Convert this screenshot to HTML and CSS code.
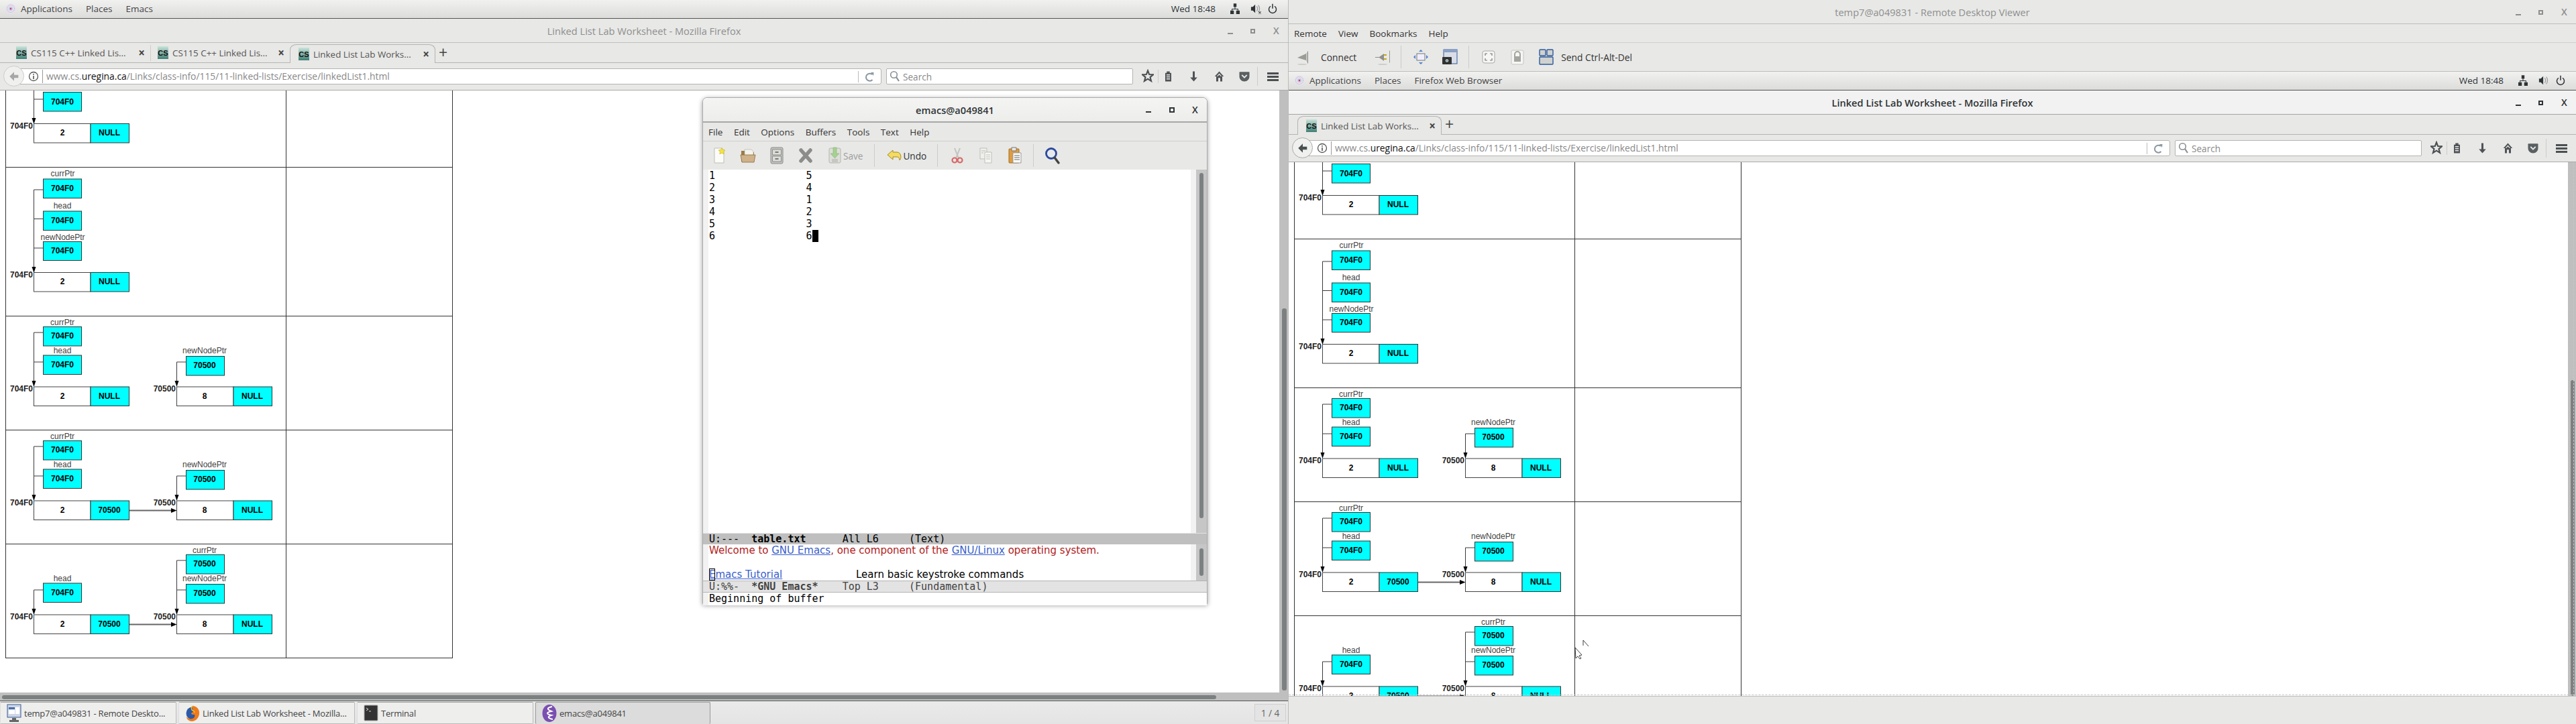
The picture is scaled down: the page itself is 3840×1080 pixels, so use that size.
FILE: index.html
```html
<!DOCTYPE html>
<html lang="en">
<head>
<meta charset="utf-8">
<title>Linked List Lab Worksheet</title>
<link rel="stylesheet" href="styles.css">
</head>
<body>
<svg class="defs" aria-hidden="true">
  <symbol id="foot" viewBox="0 0 16 20"><circle cx="8" cy="10" r="7.5" fill="#e6e2ee"/><circle cx="8" cy="10" r="5.5" fill="none" stroke="#a9a2c6" stroke-dasharray="1 1.2"/><circle cx="8" cy="10" r="3" fill="#c9c4de"/><circle cx="8" cy="10" r="1.2" fill="#c04060"/></symbol>
  <symbol id="star" viewBox="0 0 20 24"><path d="M10 2.500l2.400 6.200 6.600.4-5.100 4.200 1.700 6.400L10 16.100l-5.600 3.600 1.700-6.400L1 9.100l6.600-.4z" fill="none" stroke="#4a4f52" stroke-width="2.400"/></symbol>
  <symbol id="list" viewBox="0 0 20 24"><path d="M7 2h6v3h3v17H4V5h3z" fill="#4f5356"/><path d="M6.500 8h7v2h-7zm0 4h7v2h-7zm0 4h7v2h-7z" fill="#e8e8e6"/></symbol>
  <symbol id="down" viewBox="0 0 20 24"><path d="M8 2h4v12h5l-7 8-7-8h5z" fill="#4f5356"/></symbol>
  <symbol id="home" viewBox="0 0 20 24"><path d="M10 2L1 12h3v10h4v-7h4v7h4V12h3z" fill="#4f5356"/><path d="M10 6l-5 5.500h2L10 8.500l3 3h2z" fill="#e8e8e6"/></symbol>
  <symbol id="pocket" viewBox="0 0 20 24"><path d="M2 4h16a1 1 0 0 1 1 1v7c0 5-4 9-9 9s-9-4-9-9V5a1 1 0 0 1 1-1z" fill="#5a5f62"/><path d="M5.500 9.500L10 14l4.500-4.500" fill="none" stroke="#e8e8e6" stroke-width="2.400"/></symbol>
  <symbol id="burger" viewBox="0 0 17 13"><path d="M0 0h17v3H0zm0 5h17v3H0zm0 5h17v3H0z" fill="#4a4f52"/></symbol>
  <symbol id="info" viewBox="0 0 16 16"><circle cx="8" cy="8" r="6.500" fill="#fff" stroke="#555" stroke-width="1.300"/><path d="M7.200 7h1.600v5H7.200zm0-3h1.600v1.700H7.200z" fill="#555"/></symbol>
  <symbol id="reload" viewBox="0 0 16 20"><path d="M12 6a5.500 5.500 0 1 0 .5 8" fill="none" stroke="#8a97a0" stroke-width="2"/><path d="M10 3l4.500 0-.5 5z" fill="#8a97a0"/></symbol>
  <symbol id="lens" viewBox="0 0 16 20"><circle cx="6.500" cy="7.500" r="4.800" fill="none" stroke="#8a8f92" stroke-width="1.600"/><path d="M10 11l4 6" stroke="#8a8f92" stroke-width="2.200"/></symbol>
  <symbol id="net" viewBox="0 0 16 20"><path d="M5.500 1h5v6h-5zM0 13h6v6H0zM10 13h6v6h-6z" fill="#2e3436"/><path d="M8 7v3.500M3 13v-2.500h10V13" fill="none" stroke="#2e3436" stroke-width="1.200"/></symbol>
  <symbol id="vol" viewBox="0 0 18 20"><path d="M1 7h3l4-4v14l-4-4H1z" fill="#2e3436"/><path d="M10.500 6c2 2 2 6 0 8M13 4c3 3 3 9 0 12" fill="none" stroke="#9a9c9c" stroke-width="1.400"/></symbol>
  <symbol id="power" viewBox="0 0 16 20"><path d="M4.500 5a6.500 6.500 0 1 0 7 0" fill="none" stroke="#2e3436" stroke-width="1.700"/><path d="M8 1v8" stroke="#2e3436" stroke-width="1.800"/></symbol>
</svg>

<div class="screen">
  <section class="side">
    <header class="panel">
      <div class="panel-menu">
        <svg class="foot"><use href="#foot"/></svg>
        <span class="pm-apps">Applications</span><span>Places</span><span>Emacs</span>
      </div>
      <div class="panel-status">
        <span class="clock">Wed 18:48</span>
        <svg class="st-net"><use href="#net"/></svg>
        <svg class="st-vol" viewBox="0 0 18 20"><use href="#vol"/><path d="M14 15l3.500 3.500M17.500 15L14 18.500" stroke="#2e3436" stroke-width="1.300"/></svg>
        <svg class="st-pow"><use href="#power"/></svg>
      </div>
    </header>

    <div class="ff">
      <div class="wintitle">
        <span class="wt-text">Linked List Lab Worksheet - Mozilla Firefox</span>
        <div class="winctl"><i class="min"></i><i class="max"></i><b>X</b></div>
      </div>
      <div class="tabs">
        <div class="tab first"><span class="cs">CS</span><span class="tt">CS115 C++ Linked Lis...</span><b class="tx">×</b></div>
        <div class="tab sep"><span class="cs">CS</span><span class="tt">CS115 C++ Linked Lis...</span><b class="tx">×</b></div>
        <div class="tab active"><span class="cs">CS</span><span class="tt">Linked List Lab Works...</span><b class="tx">×</b></div>
        <span class="plus">+</span>
      </div>
      <div class="nav">
        <div class="back disabled"><svg viewBox="0 0 20 20"><path d="M10 2.500L2.500 10l7.500 7.500v-5h7v-5h-7z"/></svg></div>
        <div class="url">
          <svg class="ic-info"><use href="#info"/></svg>
          <span class="urltext">www.cs.<em>uregina.ca</em>/Links/class-info/115/11-linked-lists/Exercise/linkedList1.html</span>
          <svg class="ic-reload"><use href="#reload"/></svg>
        </div>
        <div class="search"><svg class="ic-lens"><use href="#lens"/></svg><span>Search</span></div>
        <div class="star-slot"><svg><use href="#star"/></svg></div>
        <svg class="ni ni-list"><use href="#list"/></svg>
        <svg class="ni"><use href="#down"/></svg>
        <svg class="ni"><use href="#home"/></svg>
        <svg class="ni ni-pocket"><use href="#pocket"/></svg>
        <div class="menu-slot"><svg><use href="#burger"/></svg></div>
      </div>

      <div class="page">
        <table class="lab">
          <tr class="clip-row"><td>
            <svg class="dgm h114">
              <path class="ln" d="M41.500 0V49M41.500 13H55.500"/><polygon class="ah" points="38.500,41 44.500,41 41.500,50"/>
              <rect class="ptr" x="55.500" y="2.500" width="57" height="28.500"/><text class="v" x="84" y="17">704F0</text>
              <text class="o" x="40" y="53">704F0</text>
              <rect class="cell" x="41.500" y="49.500" width="84.500" height="28.500"/><rect class="ptr" x="126" y="49.500" width="57.500" height="28.500"/>
              <text class="v" x="84" y="63">2</text><text class="v" x="154" y="63">NULL</text>
            </svg>
          </td><td></td></tr>
          <tr><td>
            <svg class="dgm h221">
              <path class="ln" d="M41.500 33V156M41.500 33H55.500M41.500 76.500H55.500M41.500 120H55.500"/><polygon class="ah" points="38.500,148 44.500,148 41.500,157"/>
              <text class="l" x="84.500" y="9">currPtr</text><rect class="ptr" x="55.500" y="17" width="57" height="28.500"/><text class="v" x="84" y="31">704F0</text>
              <text class="l" x="84" y="56.500">head</text><rect class="ptr" x="55.500" y="65" width="57" height="28.500"/><text class="v" x="84" y="79">704F0</text>
              <text class="l" x="84.500" y="104">newNodePtr</text><rect class="ptr" x="55.500" y="110.500" width="57" height="28"/><text class="v" x="84" y="124">704F0</text>
              <text class="o" x="40" y="160">704F0</text>
              <rect class="cell" x="41.500" y="156.500" width="84.500" height="28.500"/><rect class="ptr" x="126" y="156.500" width="57.500" height="28.500"/>
              <text class="v" x="84" y="170">2</text><text class="v" x="154" y="170">NULL</text>
            </svg>
          </td><td></td></tr>
          <tr><td>
            <svg class="dgm h169">
              <path class="ln" d="M41.500 24V104M41.500 24H55.500M41.500 68H55.500M254.500 68V104M254.500 68H268"/><polygon class="ah" points="38.500,96 44.500,96 41.500,105"/><polygon class="ah" points="251.500,96 257.500,96 254.500,105"/>
              <text class="l" x="84" y="9">currPtr</text><rect class="ptr" x="55.500" y="15.500" width="57" height="28.500"/><text class="v" x="84" y="29">704F0</text>
              <text class="l" x="84" y="51">head</text><rect class="ptr" x="55.500" y="58" width="57" height="28.500"/><text class="v" x="84" y="72">704F0</text>
              <text class="l" x="296" y="51">newNodePtr</text><rect class="ptr" x="268.500" y="59.500" width="57" height="28.500"/><text class="v" x="296" y="73">70500</text>
              <text class="o" x="40" y="108">704F0</text><text class="o" x="253" y="108">70500</text>
              <rect class="cell" x="41.500" y="105" width="84.500" height="28.500"/><rect class="ptr" x="126" y="105" width="57.500" height="28.500"/>
              <text class="v" x="84" y="118.500">2</text><text class="v" x="154" y="118.500">NULL</text>
              <rect class="cell" x="254.500" y="105" width="84.500" height="28.500"/><rect class="ptr" x="339" y="105" width="57.500" height="28.500"/>
              <text class="v" x="296" y="118.500">8</text><text class="v" x="367" y="118.500">NULL</text>
            </svg>
          </td><td></td></tr>
          <tr><td>
            <svg class="dgm h169">
              <path class="ln" d="M41.500 24V104M41.500 24H55.500M41.500 68H55.500M254.500 68V104M254.500 68H268"/><path class="thick" d="M183.500 119.500H248"/><polygon class="ah" points="38.500,96 44.500,96 41.500,105"/><polygon class="ah" points="251.500,96 257.500,96 254.500,105"/><polygon class="ah" points="246,116 246,123 254.500,119.500"/>
              <text class="l" x="84" y="9">currPtr</text><rect class="ptr" x="55.500" y="15.500" width="57" height="28.500"/><text class="v" x="84" y="29">704F0</text>
              <text class="l" x="84" y="51">head</text><rect class="ptr" x="55.500" y="58" width="57" height="28.500"/><text class="v" x="84" y="72">704F0</text>
              <text class="l" x="296" y="51">newNodePtr</text><rect class="ptr" x="268.500" y="59.500" width="57" height="28.500"/><text class="v" x="296" y="73">70500</text>
              <text class="o" x="40" y="108">704F0</text><text class="o" x="253" y="108">70500</text>
              <rect class="cell" x="41.500" y="105" width="84.500" height="28.500"/><rect class="ptr" x="126" y="105" width="57.500" height="28.500"/>
              <text class="v" x="84" y="118.500">2</text><text class="v" x="154" y="118.500">70500</text>
              <rect class="cell" x="254.500" y="105" width="84.500" height="28.500"/><rect class="ptr" x="339" y="105" width="57.500" height="28.500"/>
              <text class="v" x="296" y="118.500">8</text><text class="v" x="367" y="118.500">NULL</text>
            </svg>
          </td><td></td></tr>
          <tr><td>
            <svg class="dgm h169">
              <path class="ln" d="M41.500 68V104M41.500 68H55.500M254.500 24V104M254.500 24H268M254.500 68H268"/><path class="thick" d="M183.500 119.500H248"/><polygon class="ah" points="38.500,96 44.500,96 41.500,105"/><polygon class="ah" points="251.500,96 257.500,96 254.500,105"/><polygon class="ah" points="246,116 246,123 254.500,119.500"/>
              <text class="l" x="296" y="9">currPtr</text><rect class="ptr" x="268.500" y="15.500" width="57" height="28.500"/><text class="v" x="296" y="29">70500</text>
              <text class="l" x="84" y="51">head</text><rect class="ptr" x="55.500" y="58" width="57" height="28.500"/><text class="v" x="84" y="72">704F0</text>
              <text class="l" x="296" y="51">newNodePtr</text><rect class="ptr" x="268.500" y="59.500" width="57" height="28.500"/><text class="v" x="296" y="73">70500</text>
              <text class="o" x="40" y="108">704F0</text><text class="o" x="253" y="108">70500</text>
              <rect class="cell" x="41.500" y="105" width="84.500" height="28.500"/><rect class="ptr" x="126" y="105" width="57.500" height="28.500"/>
              <text class="v" x="84" y="118.500">2</text><text class="v" x="154" y="118.500">70500</text>
              <rect class="cell" x="254.500" y="105" width="84.500" height="28.500"/><rect class="ptr" x="339" y="105" width="57.500" height="28.500"/>
              <text class="v" x="296" y="118.500">8</text><text class="v" x="367" y="118.500">NULL</text>
            </svg>
          </td><td></td></tr>
        </table>
        <div class="vbar"><i></i></div>
        <div class="hbar"><i></i></div>

        <div class="emacs">
          <div class="em-title"><span>emacs@a049841</span><div class="winctl dark"><i class="min"></i><i class="max"></i><b>X</b></div></div>
          <div class="em-menu"><span>File</span><span>Edit</span><span>Options</span><span>Buffers</span><span>Tools</span><span>Text</span><span>Help</span></div>
          <div class="em-tools">
            <svg class="et" viewBox="0 0 24 26"><path d="M5 2h11l3 3v19H5z" fill="#fbfbf8" stroke="#bdbdb8"/><path d="M16 1.500l1.600 3 3.400.500-2.400 2.400.6 3.400-3.200-1.600-3.200 1.600.6-3.400L11 5l3.400-.500z" fill="#f5e23f" stroke="#c9b21a" stroke-width=".6"/></svg>
            <svg class="et" viewBox="0 0 24 26"><path d="M2 6h7l2 2h10v14H2z" fill="#9c7a48"/><path d="M7 4h10l3 3v8H7z" fill="#f4f2ec" stroke="#aaa" stroke-width=".6"/><path d="M1 12h22l-2 11H3z" fill="#cfb28a" stroke="#8a6a3c" stroke-width=".8"/></svg>
            <svg class="et" viewBox="0 0 24 26"><rect x="3" y="1" width="18" height="24" rx="2" fill="#c2c4c0" stroke="#8a8c88"/><path d="M5.500 4h13v8h-13zM5.500 14h13v8h-13z" fill="#dcdcd8" stroke="#70726e" stroke-width=".7"/><path d="M9.500 7h5v2h-5zM9.500 17h5v2h-5z" fill="#777"/></svg>
            <svg class="et" viewBox="0 0 24 26"><path d="M5 5l14 16M19 5L5 21" stroke="#8c8c8a" stroke-width="5.500" stroke-linecap="round"/></svg>
            <svg class="et" viewBox="0 0 24 26"><rect x="4" y="2" width="17" height="22" rx="2" fill="#dededa" stroke="#b4b4b0"/><path d="M10 1h5v9h4l-6.500 7L6 10h4z" fill="#a6d191" stroke="#86b174" stroke-width=".6"/><path d="M8 18h9v5H8z" fill="#c6c6c2"/></svg>
            <span class="et-txt dim">Save</span>
            <i class="et-sep s1"></i>
            <svg class="et undo" viewBox="0 0 24 26"><path d="M10 5L2 12l8 7v-4h6c3 0 4 2 4 5 3-2 3-12-4-12h-6z" fill="#f3dc63" stroke="#a8891d"/></svg>
            <span class="et-txt">Undo</span>
            <i class="et-sep s2"></i>
            <svg class="et cut" viewBox="0 0 24 26"><path d="M8 2l6 15M16 2l-6 15" stroke="#c2c2c0" stroke-width="2"/><circle cx="8" cy="20" r="3.500" fill="none" stroke="#d7686a" stroke-width="2.200"/><circle cx="16" cy="20" r="3.500" fill="none" stroke="#d7686a" stroke-width="2.200"/></svg>
            <svg class="et" viewBox="0 0 24 26"><path d="M3 2h10v16H3z" fill="#efefec" stroke="#bdbdb8"/><path d="M10 8h10v16H10z" fill="#f6f6f4" stroke="#bdbdb8"/><path d="M5 6h6M5 9h3M12 12h6M12 15h6M12 18h6" stroke="#bcbcb8"/></svg>
            <svg class="et" viewBox="0 0 24 26"><rect x="3" y="3" width="15" height="21" rx="1" fill="#dd9c3f" stroke="#a56f22"/><path d="M7 1h7v5H7z" fill="#e8e8e6" stroke="#777"/><path d="M9 9h12v15H9z" fill="#fbfbf9" stroke="#999"/><path d="M11 13h8M11 16h8M11 19h8" stroke="#666"/></svg>
            <i class="et-sep s3"></i>
            <svg class="et find" viewBox="0 0 24 26"><circle cx="10" cy="10" r="7.500" fill="#e6eef8" fill-opacity=".4" stroke="#2c4a9c" stroke-width="2.800"/><path d="M15 16l6 8" stroke="#444" stroke-width="3.400" stroke-linecap="round"/></svg>
          </div>
          <div class="em-buf upper">
            <pre class="buf-text">1               5
2               4
3               1
4               2
5               3
6               6<i class="cursor"></i></pre>
            <div class="em-sb"><i></i></div>
          </div>
          <div class="modeline on">U:---  <b>table.txt</b>      All L6     (Text)</div>
          <div class="em-buf lower">
            <div class="buf-sans"><p class="red">Welcome to <a>GNU Emacs</a>, one component of the <a>GNU/Linux</a> operating system.</p><p>&nbsp;</p><p class="tut"><a class="tut-a"><i class="cur2"></i>Emacs Tutorial</a><span class="learn">Learn basic keystroke commands</span></p></div>
            <div class="em-sb low"><i></i></div>
          </div>
          <div class="modeline off">U:%%-  <b>*GNU Emacs*</b>    Top L3     (Fundamental)</div>
          <div class="mini">Beginning of buffer</div>
        </div>
      </div>
    </div>

    <footer class="taskbar">
      <div class="tb w1">
        <svg class="tbi" viewBox="0 0 22 28"><rect x="1" y="1" width="20" height="19" fill="#cdd6e6" stroke="#3a5a94"/><rect x="3" y="5" width="9" height="3" fill="#4a6ea8"/><rect x="13" y="5" width="6" height="10" fill="#fff"/><rect x="3" y="9" width="9" height="6" fill="#fff"/><path d="M8 21h6v3h4v3H4v-3h4z" fill="#666"/></svg>
        <span>temp7@a049831 - Remote Deskto...</span>
      </div>
      <div class="tb w2">
        <svg class="tbi" viewBox="0 0 22 28"><circle cx="11" cy="14" r="9.500" fill="#2d5aa8"/><path d="M11 3c6 0 11 5 10 12-1 7-6 11-11 11-4 0-8-3-8-7 2 3 6 4 9 3 3-1 4-4 3-6-2 0-4 0-5-1 0-2 2-3 4-3-1-3-3-6-2-9z" fill="#ef7a1a"/><path d="M11 3c-2 2-2 4-1 6 2 1 4 2 4 4" fill="none" stroke="#f6c01e" stroke-width="1.500"/></svg>
        <span>Linked List Lab Worksheet - Mozilla...</span>
      </div>
      <div class="tb w3">
        <svg class="tbi" viewBox="0 0 22 28"><rect x="1" y="2" width="20" height="23" rx="1" fill="#333" stroke="#aaa"/><path d="M4 6l3 2-3 2" fill="none" stroke="#ddd"/><path d="M8 11h3" stroke="#ddd"/></svg>
        <span>Terminal</span>
      </div>
      <div class="tb w4 on">
        <svg class="tbi" viewBox="0 0 22 28"><ellipse cx="11" cy="14" rx="10.500" ry="13" fill="#7a4fb0"/><path d="M15 4C7 6 7 8 14 11 6 13 6 15 14 17c-6 2-6 4 2 6" fill="none" stroke="#fff" stroke-width="2"/></svg>
        <span>emacs@a049841</span>
      </div>
      <div class="pager">1 / 4</div>
    </footer>
  </section>

  <section class="side remote">
    <div class="wintitle rd-title">
      <span class="wt-text">temp7@a049831 - Remote Desktop Viewer</span>
      <div class="winctl"><i class="min"></i><i class="max"></i><b>X</b></div>
    </div>
    <div class="rd-menu"><span>Remote</span><span>View</span><span>Bookmarks</span><span>Help</span></div>
    <div class="rd-tools">
      <svg class="rt connect" viewBox="0 0 24 24"><path d="M1 13l13-6v10z" fill="#9a9a96"/><path d="M16 4l1-1v19l-1-1z" fill="#8a8a86"/><path d="M14 6l2-1v15l-2-2z" fill="#c6c6c2"/><ellipse cx="8" cy="23" rx="7" ry="1" fill="#ccc"/></svg>
      <span class="rt-txt">Connect</span>
      <svg class="rt disconnect" viewBox="0 0 24 24"><path d="M1 12h6l7-5v11l-7-5H1z" fill="#8f8f8b"/><path d="M14 9h4M14 15h4" stroke="#c9a818" stroke-width="2"/><path d="M22 3l1-1v19l-1-1z" fill="#9a9a96"/><ellipse cx="12" cy="23" rx="7" ry="1" fill="#ccc"/></svg>
      <i class="rt-sep a"></i>
      <svg class="rt move" viewBox="0 0 24 24"><rect x="6" y="7" width="12" height="10" fill="#eef" stroke="#777"/><path d="M12 1l3 3H9zM12 23l3-3H9zM1 12l3-3v6zM23 12l-3-3v6z" fill="#4f82c8"/></svg>
      <svg class="rt shot" viewBox="0 0 24 24"><rect x="3" y="1" width="20" height="21" fill="#d8dee8" stroke="#2f5a9c"/><rect x="3" y="1" width="20" height="4" fill="#8aa0c4"/><rect x="1" y="12" width="14" height="11" rx="1" fill="#333"/><circle cx="8" cy="17.500" r="3.200" fill="#9aa" stroke="#111"/></svg>
      <i class="rt-sep b"></i>
      <svg class="rt full" viewBox="0 0 24 24"><rect x="3" y="3" width="18" height="18" rx="3" fill="#f6f6f4" stroke="#a8a8a4"/><path d="M7 10V7h3M14 7h3v3M17 14v3h-3M10 17H7v-3" fill="none" stroke="#777" stroke-width="1.200"/></svg>
      <svg class="rt lock" viewBox="0 0 24 24"><rect x="3" y="2" width="18" height="21" rx="2" fill="#f6f6f4" stroke="#c4c4c0"/><path d="M8 11V8a4 4 0 0 1 8 0v3" fill="none" stroke="#a4a4a0" stroke-width="2"/><rect x="7" y="11" width="10" height="8" fill="#a4a4a0"/></svg>
      <svg class="rt send" viewBox="0 0 24 24"><rect x="2" y="1" width="9" height="9" rx="1" fill="#cfd2ce" stroke="#2f5a9c" stroke-width="1.400"/><rect x="13" y="1" width="9" height="9" rx="1" fill="#cfd2ce" stroke="#2f5a9c" stroke-width="1.400"/><rect x="2" y="12" width="20" height="11" rx="1" fill="#cfd2ce" stroke="#2f5a9c" stroke-width="1.400"/></svg>
      <span class="rt-txt">Send Ctrl-Alt-Del</span>
    </div>
    <div class="inner">
      <header class="panel inner-panel">
        <div class="panel-menu">
          <svg class="foot"><use href="#foot"/></svg>
          <span class="pm-apps">Applications</span><span>Places</span><span>Firefox Web Browser</span>
        </div>
        <div class="panel-status">
          <span class="clock">Wed 18:48</span>
          <svg class="st-net"><use href="#net"/></svg>
          <svg class="st-vol"><use href="#vol"/></svg>
          <svg class="st-pow"><use href="#power"/></svg>
        </div>
      </header>
      <div class="ff focus">
        <div class="wintitle">
          <span class="wt-text">Linked List Lab Worksheet - Mozilla Firefox</span>
          <div class="winctl dark"><i class="min"></i><i class="max"></i><b>X</b></div>
        </div>
        <div class="tabs">
          <div class="tab active solo"><span class="cs">CS</span><span class="tt">Linked List Lab Works...</span><b class="tx">×</b></div>
          <span class="plus">+</span>
        </div>
        <div class="nav">
          <div class="back"><svg viewBox="0 0 20 20"><path d="M10 2.500L2.500 10l7.500 7.500v-5h7v-5h-7z"/></svg></div>
          <div class="url">
            <svg class="ic-info"><use href="#info"/></svg>
            <span class="urltext">www.cs.<em>uregina.ca</em>/Links/class-info/115/11-linked-lists/Exercise/linkedList1.html</span>
            <svg class="ic-reload"><use href="#reload"/></svg>
          </div>
          <div class="search"><svg class="ic-lens"><use href="#lens"/></svg><span>Search</span></div>
          <div class="star-slot"><svg><use href="#star"/></svg></div>
          <svg class="ni ni-list"><use href="#list"/></svg>
          <svg class="ni"><use href="#down"/></svg>
          <svg class="ni"><use href="#home"/></svg>
          <svg class="ni ni-pocket"><use href="#pocket"/></svg>
          <div class="menu-slot"><svg><use href="#burger"/></svg></div>
        </div>
        <div class="page rpage">
          <table class="lab">
            <tr class="clip-row"><td>
              <svg class="dgm h114">
                <path class="ln" d="M41.500 0V49M41.500 13H55.500"/><polygon class="ah" points="38.500,41 44.500,41 41.500,50"/>
                <rect class="ptr" x="55.500" y="2.500" width="57" height="28.500"/><text class="v" x="84" y="17">704F0</text>
                <text class="o" x="40" y="53">704F0</text>
                <rect class="cell" x="41.500" y="49.500" width="84.500" height="28.500"/><rect class="ptr" x="126" y="49.500" width="57.500" height="28.500"/>
                <text class="v" x="84" y="63">2</text><text class="v" x="154" y="63">NULL</text>
              </svg>
            </td><td></td></tr>
            <tr><td>
              <svg class="dgm h221">
                <path class="ln" d="M41.500 33V156M41.500 33H55.500M41.500 76.500H55.500M41.500 120H55.500"/><polygon class="ah" points="38.500,148 44.500,148 41.500,157"/>
                <text class="l" x="84.500" y="9">currPtr</text><rect class="ptr" x="55.500" y="17" width="57" height="28.500"/><text class="v" x="84" y="31">704F0</text>
                <text class="l" x="84" y="56.500">head</text><rect class="ptr" x="55.500" y="65" width="57" height="28.500"/><text class="v" x="84" y="79">704F0</text>
                <text class="l" x="84.500" y="104">newNodePtr</text><rect class="ptr" x="55.500" y="110.500" width="57" height="28"/><text class="v" x="84" y="124">704F0</text>
                <text class="o" x="40" y="160">704F0</text>
                <rect class="cell" x="41.500" y="156.500" width="84.500" height="28.500"/><rect class="ptr" x="126" y="156.500" width="57.500" height="28.500"/>
                <text class="v" x="84" y="170">2</text><text class="v" x="154" y="170">NULL</text>
              </svg>
            </td><td></td></tr>
            <tr><td>
              <svg class="dgm h169">
                <path class="ln" d="M41.500 24V104M41.500 24H55.500M41.500 68H55.500M254.500 68V104M254.500 68H268"/><polygon class="ah" points="38.500,96 44.500,96 41.500,105"/><polygon class="ah" points="251.500,96 257.500,96 254.500,105"/>
                <text class="l" x="84" y="9">currPtr</text><rect class="ptr" x="55.500" y="15.500" width="57" height="28.500"/><text class="v" x="84" y="29">704F0</text>
                <text class="l" x="84" y="51">head</text><rect class="ptr" x="55.500" y="58" width="57" height="28.500"/><text class="v" x="84" y="72">704F0</text>
                <text class="l" x="296" y="51">newNodePtr</text><rect class="ptr" x="268.500" y="59.500" width="57" height="28.500"/><text class="v" x="296" y="73">70500</text>
                <text class="o" x="40" y="108">704F0</text><text class="o" x="253" y="108">70500</text>
                <rect class="cell" x="41.500" y="105" width="84.500" height="28.500"/><rect class="ptr" x="126" y="105" width="57.500" height="28.500"/>
                <text class="v" x="84" y="118.500">2</text><text class="v" x="154" y="118.500">NULL</text>
                <rect class="cell" x="254.500" y="105" width="84.500" height="28.500"/><rect class="ptr" x="339" y="105" width="57.500" height="28.500"/>
                <text class="v" x="296" y="118.500">8</text><text class="v" x="367" y="118.500">NULL</text>
              </svg>
            </td><td></td></tr>
            <tr><td>
              <svg class="dgm h169">
                <path class="ln" d="M41.500 24V104M41.500 24H55.500M41.500 68H55.500M254.500 68V104M254.500 68H268"/><path class="thick" d="M183.500 119.500H248"/><polygon class="ah" points="38.500,96 44.500,96 41.500,105"/><polygon class="ah" points="251.500,96 257.500,96 254.500,105"/><polygon class="ah" points="246,116 246,123 254.500,119.500"/>
                <text class="l" x="84" y="9">currPtr</text><rect class="ptr" x="55.500" y="15.500" width="57" height="28.500"/><text class="v" x="84" y="29">704F0</text>
                <text class="l" x="84" y="51">head</text><rect class="ptr" x="55.500" y="58" width="57" height="28.500"/><text class="v" x="84" y="72">704F0</text>
                <text class="l" x="296" y="51">newNodePtr</text><rect class="ptr" x="268.500" y="59.500" width="57" height="28.500"/><text class="v" x="296" y="73">70500</text>
                <text class="o" x="40" y="108">704F0</text><text class="o" x="253" y="108">70500</text>
                <rect class="cell" x="41.500" y="105" width="84.500" height="28.500"/><rect class="ptr" x="126" y="105" width="57.500" height="28.500"/>
                <text class="v" x="84" y="118.500">2</text><text class="v" x="154" y="118.500">70500</text>
                <rect class="cell" x="254.500" y="105" width="84.500" height="28.500"/><rect class="ptr" x="339" y="105" width="57.500" height="28.500"/>
                <text class="v" x="296" y="118.500">8</text><text class="v" x="367" y="118.500">NULL</text>
              </svg>
            </td><td></td></tr>
            <tr><td>
              <svg class="dgm h169">
                <path class="ln" d="M41.500 68V104M41.500 68H55.500M254.500 24V104M254.500 24H268M254.500 68H268"/><path class="thick" d="M183.500 119.500H248"/><polygon class="ah" points="38.500,96 44.500,96 41.500,105"/><polygon class="ah" points="251.500,96 257.500,96 254.500,105"/><polygon class="ah" points="246,116 246,123 254.500,119.500"/>
                <text class="l" x="296" y="9">currPtr</text><rect class="ptr" x="268.500" y="15.500" width="57" height="28.500"/><text class="v" x="296" y="29">70500</text>
                <text class="l" x="84" y="51">head</text><rect class="ptr" x="55.500" y="58" width="57" height="28.500"/><text class="v" x="84" y="72">704F0</text>
                <text class="l" x="296" y="51">newNodePtr</text><rect class="ptr" x="268.500" y="59.500" width="57" height="28.500"/><text class="v" x="296" y="73">70500</text>
                <text class="o" x="40" y="108">704F0</text><text class="o" x="253" y="108">70500</text>
                <rect class="cell" x="41.500" y="105" width="84.500" height="28.500"/><rect class="ptr" x="126" y="105" width="57.500" height="28.500"/>
                <text class="v" x="84" y="118.500">2</text><text class="v" x="154" y="118.500">70500</text>
                <rect class="cell" x="254.500" y="105" width="84.500" height="28.500"/><rect class="ptr" x="339" y="105" width="57.500" height="28.500"/>
                <text class="v" x="296" y="118.500">8</text><text class="v" x="367" y="118.500">NULL</text>
              </svg>
            </td><td></td></tr>
          </table>
          <div class="vbar rv"><i></i></div>
          <svg class="mouse" viewBox="0 0 24 30"><path d="M1 12l10 11-4 1 3 4-2 1-3-4-3 3z" fill="#fff" stroke="#111" stroke-width=".8"/><path d="M13 1v8M13 1l8 9" fill="none" stroke="#111" stroke-width=".8"/></svg>
          <div class="dash-h"></div><div class="dash-v"></div>
        </div>
      </div>
    </div>
    <div class="rd-foot"></div>
  </section>
</div>
</body>
</html>
```

FILE: styles.css
```css
* { box-sizing: border-box; }
html, body { margin: 0; padding: 0; }
body { width: 3840px; height: 1080px; overflow: hidden; background: #e8e8e6; font-family: "Open Sans", "Noto Sans", sans-serif; font-size: 13.5px; color: #2e3436; }
.defs { position: absolute; width: 0; height: 0; }
.screen { display: grid; grid-template-columns: 1920px 1920px; height: 1080px; }
.side { display: flex; flex-direction: column; height: 1080px; overflow: hidden; position: relative; }

/* top panel */
.panel { flex: 0 0 28px; height: 28px; display: flex; justify-content: space-between; align-items: center; background: linear-gradient(#f1f1f0, #dcdcdb); border-bottom: 1px solid #555; padding: 0 0 1px 8px; }
.panel-menu { display: flex; align-items: center; color: #444; }
.foot { width: 16px; height: 20px; margin-right: 7px; }
.panel-menu span { margin-right: 20px; }
.panel-status { display: flex; align-items: center; }
.clock { margin-right: 22px; }
.st-net { width: 14px; height: 18px; margin-right: 16px; }
.st-vol { width: 16px; height: 18px; margin-right: 10px; }
.st-pow { width: 14px; height: 17px; margin-right: 16px; }

/* window title */
.ff { display: flex; flex-direction: column; flex: 1 1 auto; min-height: 0; }
.wintitle { flex: 0 0 36px; height: 36px; position: relative; display: flex; align-items: center; justify-content: center; background: #e8e8e6; border-bottom: 1px solid #bdbdbb; color: #8d8f8f; font-size: 14.6px; }
.winctl { position: absolute; right: 0; top: 0; bottom: 0; width: 100px; color: #8d8f8f; }
.winctl .min { position: absolute; left: 10px; top: 21px; width: 8px; height: 2px; background: currentColor; }
.winctl .max { position: absolute; left: 44px; top: 15px; width: 7px; height: 7px; border: 2px solid currentColor; }
.winctl b { position: absolute; left: 78px; top: 8px; font-size: 14px; font-weight: 600; }
.winctl.dark { color: #2e3436; }
.ff .wintitle { background: #e8e8e6; }
.focus .wintitle { background: #f2f2f2; color: #2e3436; font-weight: 600; border-bottom-color: #a4a4a4; }

/* tabs */
.tabs { flex: 0 0 30px; height: 30px; display: flex; align-items: center; background: #e8e8e6; border-bottom: 1px solid #b4b4b2; padding-left: 24px; color: #555; position: relative; font-size: 13.4px; }
.tab { display: flex; align-items: center; height: 24px; flex: none; white-space: nowrap; }
.tab.first { width: 200px; }
.tab.sep { width: 208px; padding-left: 10px; border-left: 1px solid #ccc; }
.tab.active { width: 217px; padding-left: 12px; background: #e8e8e6; border: 1px solid #b4b4b2; border-bottom: none; border-radius: 10px 10px 0 0 / 8px 8px 0 0; height: 28px; align-self: flex-end; margin-bottom: -1px; }
.tab.solo { margin-left: -11px; width: 215px; }
.cs { width: 16px; height: 19px; background: linear-gradient(#c8e4da, #3f7f74); font: bold 11px "Liberation Sans", sans-serif; color: #111; display: flex; align-items: center; justify-content: center; margin-right: 6px; flex: none; }
.tt { flex: 1 1 auto; white-space: nowrap; }
.tx { width: 18px; text-align: center; font-size: 17px; color: #444; font-weight: 700; flex: none; margin-right: 4px; }
.plus { font-size: 23px; margin-left: 5px; color: #444; font-weight: 400; line-height: 1; }

/* nav */
.nav { flex: 0 0 41px; height: 41px; display: flex; align-items: center; background: #e8e8e6; border-bottom: 1px solid #aaa; position: relative; padding-left: 26px; }
.back { position: absolute; left: 5px; top: 4px; width: 31px; height: 31px; border-radius: 50%; background: #f0f0ee; border: 1px solid #aaa; display: flex; align-items: center; justify-content: center; z-index: 1; }
.back svg { width: 18px; height: 18px; fill: #4a4f52; }
.back.disabled { border-color: #ccc; }
.back.disabled svg { fill: #a6a8a8; }
.url { width: 1288px; height: 24px; background: #fff; border: 1px solid #b4b4b2; border-radius: 0 3px 3px 0; display: flex; align-items: center; padding-left: 15px; position: relative; font-size: 13.85px; color: #888; }
.ic-info { width: 16px; height: 16px; margin-right: 5px; flex: none; }
.urltext { padding-left: 5px; border-left: 1px solid #999; white-space: nowrap; line-height: 20px; }
.urltext em { font-style: normal; color: #111; }
.ic-reload { position: absolute; right: 9px; top: 2px; width: 16px; height: 20px; }
.url::after { content: ""; position: absolute; right: 33px; top: 3px; height: 17px; border-left: 1px solid #bbb; }
.search { width: 368px; height: 24px; margin-left: 7px; background: #fff; border: 1px solid #b4b4b2; border-radius: 2px; display: flex; align-items: center; padding-left: 4px; color: #888; font-size: 13.6px; }
.ic-lens { width: 16px; height: 20px; margin-right: 4px; }
.star-slot { width: 38px; height: 20px; padding-left: 13px; border-right: 1px solid #ccc; flex: none; }
.star-slot svg { width: 18px; height: 22px; margin-top: -1px; display: block; }
.ni { width: 15px; height: 18px; margin-left: 23px; flex: none; }
.ni-list { margin-left: 7px; }
.ni-pocket { width: 18px; height: 20px; margin-left: 21px; }
.menu-slot { margin-left: 10px; padding-left: 14px; border-left: 1px solid #ccc; height: 28px; display: flex; align-items: center; flex: none; }
.menu-slot svg { width: 17px; height: 13px; }

/* page + table */
.page { flex: 1 1 auto; position: relative; background: #fff; overflow: hidden; min-height: 0; }
.lab { border-collapse: collapse; table-layout: fixed; width: 667px; margin-left: 8px; position: relative; }
.lab td { border: 1px solid #333; padding: 0; vertical-align: top; }
.lab td:first-child { width: 418px; }
.clip-row td { border-top: none; }
.dgm { display: block; width: 417px; font-family: "Liberation Sans", Arial, sans-serif; font-size: 12px; overflow: visible; }
.h114 { height: 114px; }
.h221 { height: 221px; }
.h169 { height: 169px; }
.ln { fill: none; stroke: #3a3a3a; stroke-width: 1; }
.thick { fill: none; stroke: #666; stroke-width: 2; }
.ah { fill: #000; }
.ptr { fill: #0ff; stroke: #333; stroke-width: 1; }
.cell { fill: #fff; stroke: #444; stroke-width: 1; }
.l { text-anchor: middle; dominant-baseline: central; fill: #444; }
.v { text-anchor: middle; dominant-baseline: central; fill: #000; font-weight: 700; }
.o { text-anchor: end; dominant-baseline: central; fill: #222; font-weight: 700; }

/* scrollbars */
.vbar { position: absolute; right: 0; top: 0; bottom: 13px; width: 13px; background: #bfbfbf; }
.vbar i { position: absolute; left: 4px; right: 2px; top: 325px; bottom: 3px; background: #7c8081; border-radius: 3px; }
.hbar { position: absolute; left: 0; right: 0; bottom: 0; height: 13px; background: #bfbfbf; border-bottom: 1px solid #555; }
.hbar i { position: absolute; left: 3px; width: 1810px; top: 4px; height: 6px; background: #7c8081; border-radius: 3px; }

/* emacs */
.emacs { position: absolute; left: 1047px; top: 10px; width: 753px; height: 756px; background: #fff; border: 1px solid #aaa; border-radius: 7px 7px 0 0; box-shadow: 0 2px 7px rgba(0,0,0,.4); display: flex; flex-direction: column; }
.em-title { flex: 0 0 37px; position: relative; background: linear-gradient(#f4f4f3, #ededec); border-bottom: 2px solid #a8a8a8; border-radius: 7px 7px 0 0; display: flex; align-items: center; justify-content: center; font-weight: 600; font-size: 14.6px; color: #2e3436; }
.em-title .winctl { right: 2px; }
.em-title .winctl .min { left: 11px; top: 20px; }
.em-title .winctl .max { left: 46px; top: 14px; width: 8px; height: 8px; }
.em-title .winctl b { left: 80px; top: 8px; }
.em-menu { flex: 0 0 28px; display: flex; align-items: center; background: #e8e8e6; border-bottom: 1px solid #cfcfcd; padding-left: 8px; color: #333; }
.em-menu span { margin-right: 16.5px; }
.em-tools { flex: 0 0 42px; display: flex; align-items: center; background: #e8e8e6; padding-left: 12px; }
.et { width: 24px; height: 26px; margin-right: 19px; flex: none; }
.et-txt { font-size: 13.6px; }
.et-txt.dim { color: #9a9c9c; margin-left: -18px; }
.et-sep { width: 1px; height: 34px; background: #ccc; flex: none; }
.s1 { margin-left: 17px; margin-right: 17px; }
.undo { margin-right: 1px; }
.s2 { margin-left: 16px; margin-right: 17px; }
.s3 { margin-left: -4px; margin-right: 16px; }
.find { margin-right: 0; }
.em-buf { position: relative; background: #fff; display: flex; }
.upper { flex: 0 0 542px; }
.lower { flex: 0 0 54px; }
.buf-text { margin: 0; flex: 1; padding-left: 9px; font: 15px/18px "DejaVu Sans Mono", monospace; color: #000; background: linear-gradient(90deg, #f2f2f2 8px, #fff 8px); }
.cursor { display: inline-block; width: 9px; height: 18px; background: #000; vertical-align: top; }
.em-sb { width: 16px; background: #c6c6c6; position: relative; flex: none; border-left: 8px solid #f2f2f2; box-sizing: content-box; }
.em-sb i { position: absolute; left: 5px; width: 6px; top: 5px; bottom: 22px; background: #7c8081; border-radius: 3px; }
.em-sb.low i { top: 6px; bottom: 7px; }
.modeline { height: 17px; font: 15px/17px "DejaVu Sans Mono", monospace; padding-left: 9px; white-space: pre; color: #000; flex: none; }
.modeline.on { background: #bfbfbf; border-top: 1px solid #e2e2e2; }
.modeline.off { background: #e3e3e3; color: #444; border-top: 1px solid #b4b4b4; border-bottom: 1px solid #b4b4b4; height: 18px; }
.buf-sans { flex: 1; padding-left: 9px; font: 15px/18px "DejaVu Sans", sans-serif; color: #000; background: linear-gradient(90deg, #f2f2f2 8px, #fff 8px); }
.buf-sans p { margin: 0; white-space: pre; height: 18px; }
.red { color: #b22222; }
.buf-sans a { color: #3a5fcd; text-decoration: underline; }
.tut { position: relative; }
.tut-a { position: relative; }
.cur2 { position: absolute; left: 0; top: 0; width: 9px; height: 18px; border: 1px solid #000; }
.learn { position: absolute; left: 219px; top: 0; color: #000; }
.mini { height: 19px; font: 15px/18px "DejaVu Sans Mono", monospace; padding-left: 9px; background: linear-gradient(90deg, #f2f2f2 8px, #fff 8px); white-space: pre; color: #000; flex: none; }

/* taskbar */
.taskbar { flex: 0 0 34px; height: 34px; background: linear-gradient(#eaeaea, #e4e4e4); display: flex; align-items: stretch; position: relative; padding-top: 1px; }
.tb { display: flex; align-items: center; padding-left: 9px; border: 1px solid #bbb; border-top: 1px solid #999; border-left-color: #ddd; border-radius: 2px; background: #eeeeed; margin-right: 3px; color: #444; font-size: 13px; letter-spacing: -.2px; white-space: nowrap; }
.tb.on { background: #dcdcdc; border-color: #999; border-bottom: none; }
.w1 { width: 263px; }
.w2 { width: 263px; }
.w3 { width: 263px; }
.w4 { width: 261px; }
.tbi { width: 22px; height: 28px; margin-right: 4px; flex: none; }
.pager { position: absolute; right: 3px; top: 4px; width: 47px; height: 26px; background: #e4e4e4; border: 1px solid #cfcfcf; display: flex; align-items: center; justify-content: center; color: #666; font-size: 13.6px; }

/* remote desktop viewer */
.remote { border-left: 1px solid #bbb; }
.rd-title { flex: 0 0 36px; }
.rd-menu { flex: 0 0 28px; height: 28px; display: flex; align-items: center; background: #e8e8e6; border-bottom: 1px solid #cfcfcd; padding-left: 8px; color: #333; }
.rd-menu span { margin-right: 17px; }
.rd-tools { flex: 0 0 43px; height: 43px; display: flex; align-items: center; background: #e8e8e6; border-bottom: 1px solid #bdbdbb; color: #333; padding-left: 12px; }
.rt { width: 24px; height: 24px; flex: none; margin-right: 19px; }
.rt-txt { font-size: 13.8px; white-space: nowrap; }
.connect { margin-right: 12px; }
.disconnect { margin-left: 27px; margin-right: 15px; }
.rt-sep { width: 1px; height: 34px; background: #ccc; flex: none; }
.rt-sep.a { margin-right: 17px; }
.rt-sep.b { margin-left: -3px; margin-right: 17px; }
.send { margin-right: 10px; }
.inner { flex: 0 0 931px; display: flex; flex-direction: column; overflow: hidden; }
.rd-foot { flex: 1 1 auto; background: #e8e8e6; border-top: 1px solid #bbb; }
.rpage .vbar { right: 0; bottom: 0; width: 12px; }
.rv i { left: 4px; right: 2px; top: 325px; bottom: 0; }
.mouse { position: absolute; left: 426px; top: 712px; width: 24px; height: 30px; }
.dash-h { position: absolute; left: 0; right: 0; bottom: 1px; border-top: 1px dashed #c6c6c6; }
.dash-v { position: absolute; right: 3px; top: 0; bottom: 0; border-left: 1px dashed #c6c6c6; }
.inner .lab { margin-left: 8px; }
```
